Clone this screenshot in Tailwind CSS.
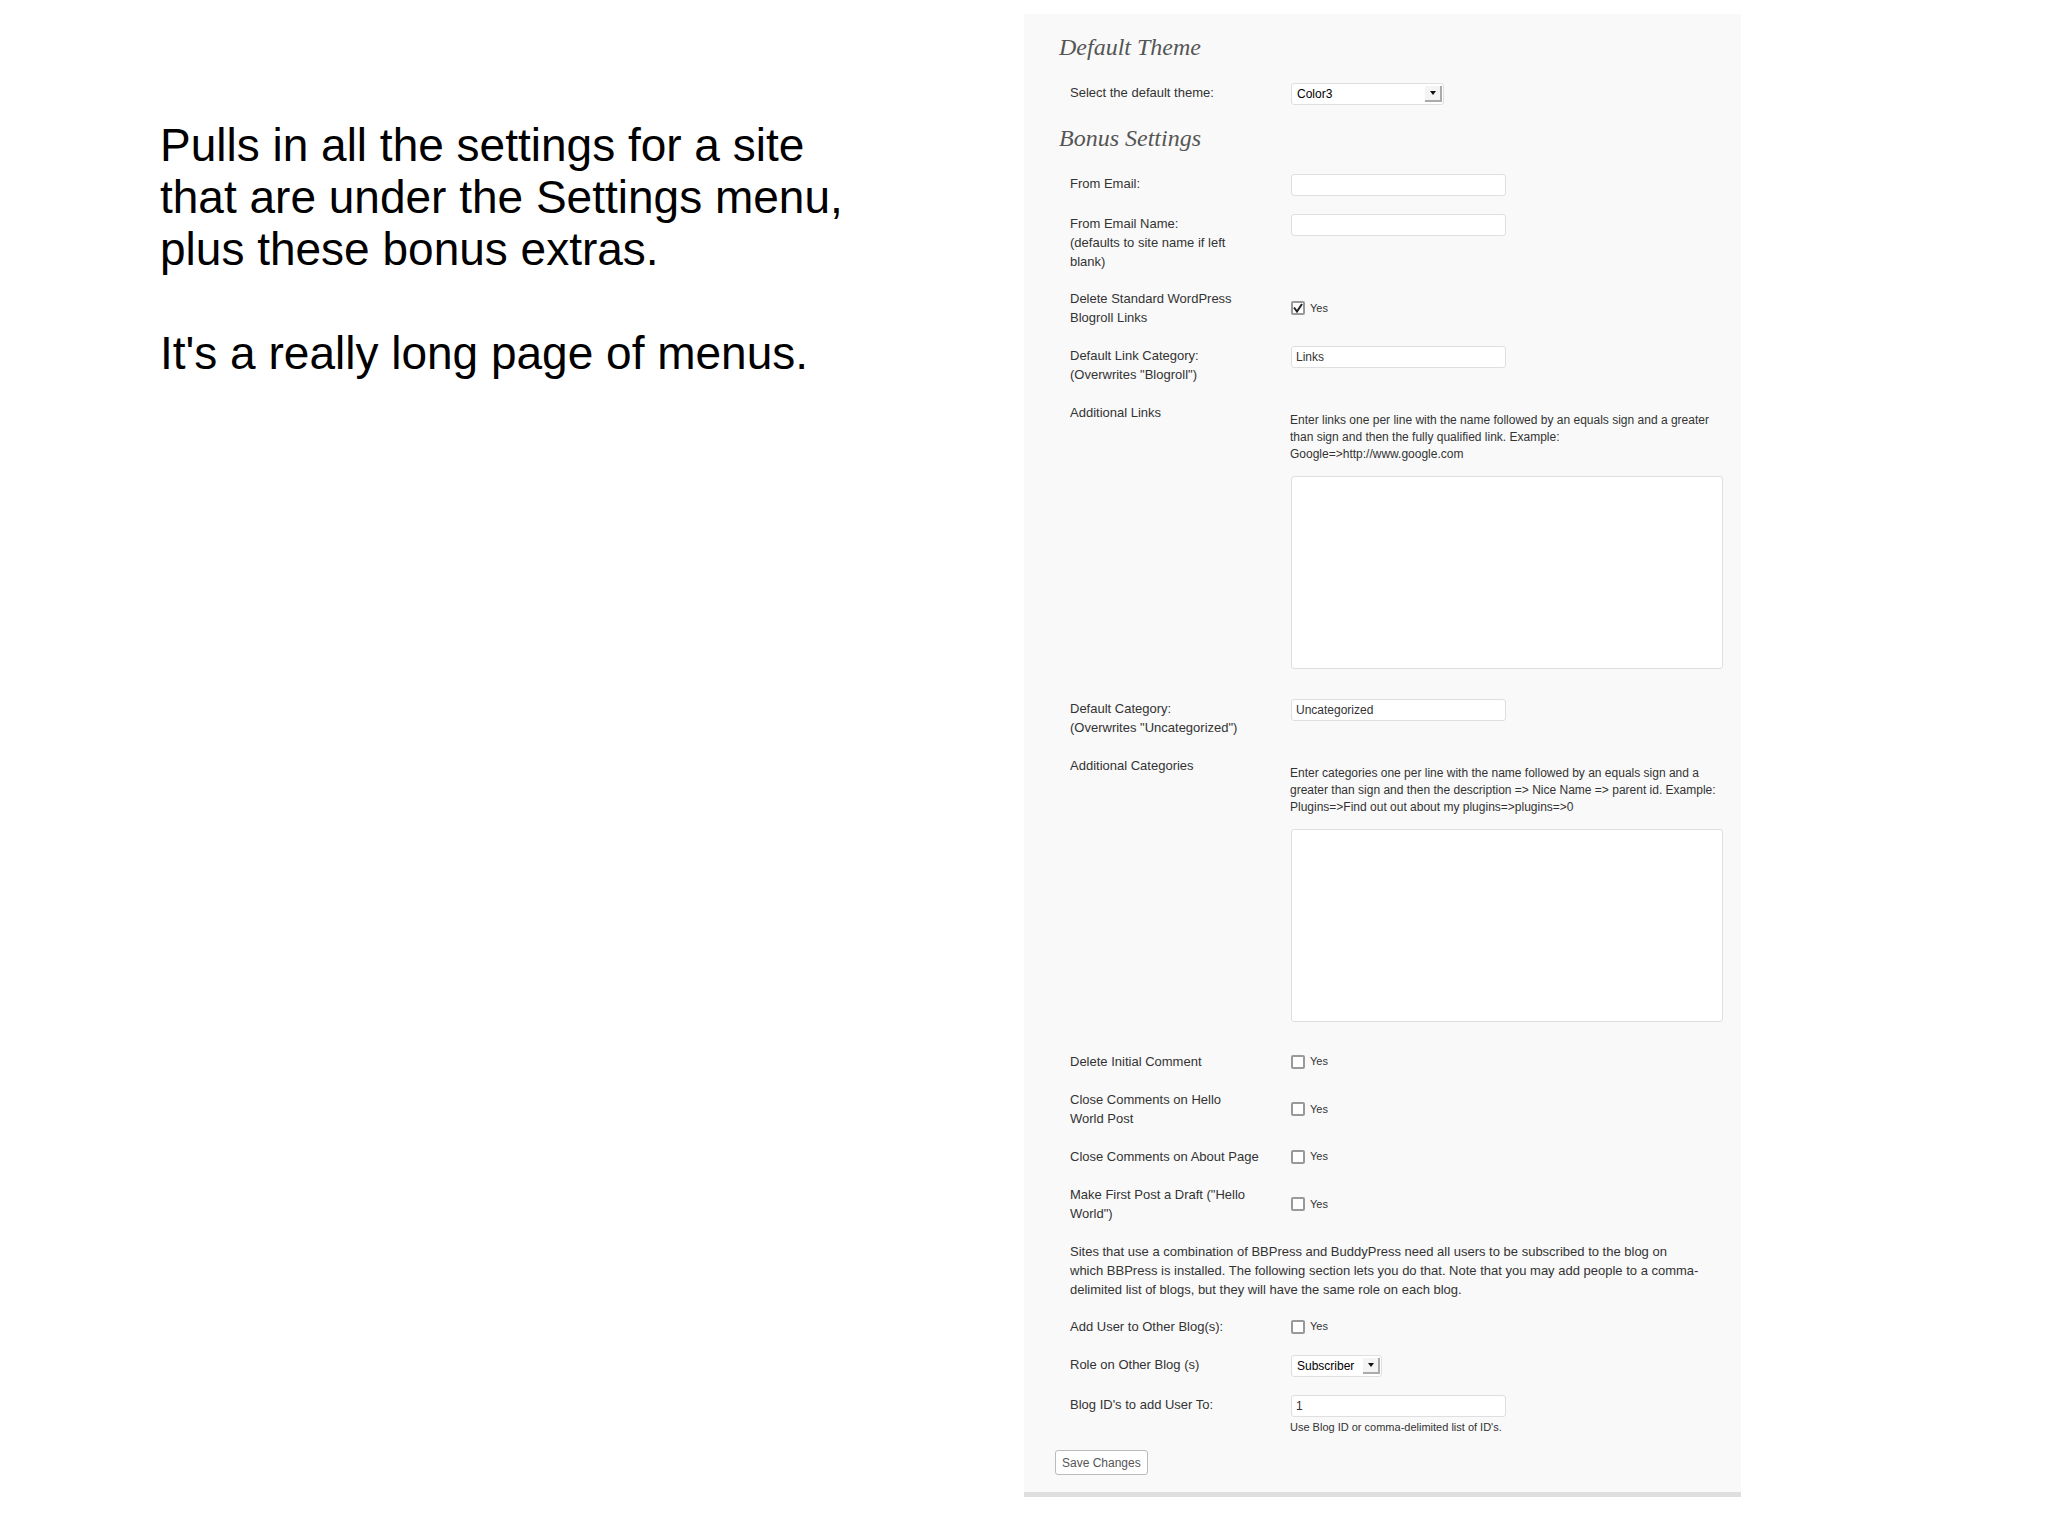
<!DOCTYPE html>
<html lang="en">
<head>
  <meta charset="UTF-8" />
  <meta name="viewport" content="width=device-width, initial-scale=1.0" />
  <title>Bonus Settings</title>
  <script src="https://cdn.jsdelivr.net/npm/@tailwindcss/browser@4"></script>
</head>
<body class="bg-white font-['Liberation_Sans',Arial,sans-serif] text-[#333]">
  <main class="flex items-start">
    <section class="w-1/2 pt-[119px] pl-[160px] pr-[140px] text-[46px] leading-[52px] text-black">
      <p class="mb-[52px]">Pulls in all the settings for a site that are under the Settings menu, plus these bonus extras.</p>
      <p>It's a really long page of menus.</p>
    </section>

    <form class="w-[35%] mt-[14px] pt-2 pb-[17px] bg-[#f9f9f9] border-b-5 border-[#dfdfdf] text-[13px] leading-[19px]">
      <h2 class="pl-[35px] font-['Liberation_Serif',serif] italic text-2xl leading-[51px] text-[#555]">Default Theme</h2>

      <div class="flex pt-[10px] pb-2 pl-[46px] pr-[18px]">
        <label for="theme" class="w-[202px] mr-[19px] shrink-0">Select the default theme:</label>
        <div class="relative w-[153px]">
          <select id="theme" class="block appearance-none w-full h-[22px] pl-[5px] bg-white border border-[#dfdfdf] rounded-[3px] text-xs leading-[20px] text-black">
            <option>Color3</option>
          </select>
          <span class="absolute top-[3px] right-[2px] w-[17px] h-[16px] flex items-center justify-center bg-[#f4f4f4] border-r-2 border-b-2 border-[#aaa] pointer-events-none">
            <svg class="w-[6px] h-[4px]" viewBox="0 0 6 4"><path d="M0 0h6L3 4z" fill="#111" /></svg>
          </span>
        </div>
      </div>

      <h2 class="pl-[35px] font-['Liberation_Serif',serif] italic text-2xl leading-[51px] text-[#555]">Bonus Settings</h2>

      <div class="flex pt-[10px] pb-[9px] pl-[46px] pr-[18px]">
        <label for="from-email" class="w-[202px] mr-[19px] shrink-0">From Email:</label>
        <input type="text" id="from-email" class="w-[215px] h-[22px] px-1 bg-white border border-[#dfdfdf] rounded-[3px] text-xs">
      </div>

      <div class="flex pt-[9px] pb-[9px] pl-[46px] pr-[18px]">
        <label for="from-name" class="w-[202px] mr-[19px] shrink-0">From Email Name:<br>(defaults to site name if left<br>blank)</label>
        <input type="text" id="from-name" class="w-[215px] h-[22px] px-1 bg-white border border-[#dfdfdf] rounded-[3px] text-xs">
      </div>

      <div class="flex pt-[9px] pb-[10px] pl-[46px] pr-[18px]">
        <span class="w-[202px] mr-[19px] shrink-0">Delete Standard WordPress<br>Blogroll Links</span>
        <label class="relative flex items-center gap-[5px] text-[11px]">
          <input type="checkbox" checked class="peer appearance-none w-[14px] h-[14px] bg-white border-2 border-[#999] rounded-[2px]">
          <svg class="hidden peer-checked:block absolute left-[2px] w-[10px] h-[10px] pointer-events-none" viewBox="0 0 10 10"><path d="M1 4.5L4 8.5L9 1" fill="none" stroke="#222" stroke-width="2" /></svg>
          Yes
        </label>
      </div>

      <div class="flex pt-[9px] pb-[10px] pl-[46px] pr-[18px]">
        <label for="link-cat" class="w-[202px] mr-[19px] shrink-0">Default Link Category:<br>(Overwrites "Blogroll")</label>
        <input type="text" id="link-cat" value="Links" class="w-[215px] h-[22px] px-1 bg-white border border-[#dfdfdf] rounded-[3px] text-xs">
      </div>

      <div class="flex pt-[9px] pb-[21px] pl-[46px] pr-[18px]">
        <label for="links" class="w-[202px] mr-[19px] shrink-0">Additional Links</label>
        <div class="grow pt-[9px]">
          <p class="-ml-px mb-[13px] text-xs leading-[17px]">Enter links one per line with the name followed by an equals sign and a greater<br>than sign and then the fully qualified link. Example:<br>Google=&gt;http://www.google.com</p>
          <textarea id="links" class="block w-full h-[193px] bg-white border border-[#dfdfdf] rounded-[3px] resize-none"></textarea>
        </div>
      </div>

      <div class="flex pt-[9px] pb-[10px] pl-[46px] pr-[18px]">
        <label for="cat" class="w-[202px] mr-[19px] shrink-0">Default Category:<br>(Overwrites "Uncategorized")</label>
        <input type="text" id="cat" value="Uncategorized" class="w-[215px] h-[22px] px-1 bg-white border border-[#dfdfdf] rounded-[3px] text-xs">
      </div>

      <div class="flex pt-[9px] pb-[21px] pl-[46px] pr-[18px]">
        <label for="cats" class="w-[202px] mr-[19px] shrink-0">Additional Categories</label>
        <div class="grow pt-[9px]">
          <p class="-ml-px mb-[13px] text-xs leading-[17px]">Enter categories one per line with the name followed by an equals sign and a<br>greater than sign and then the description =&gt; Nice Name =&gt; parent id. Example:<br>Plugins=&gt;Find out out about my plugins=&gt;plugins=&gt;0</p>
          <textarea id="cats" class="block w-full h-[193px] bg-white border border-[#dfdfdf] rounded-[3px] resize-none"></textarea>
        </div>
      </div>

      <div class="flex pt-[9px] pb-[10px] pl-[46px] pr-[18px]">
        <span class="w-[202px] mr-[19px] shrink-0">Delete Initial Comment</span>
        <label class="flex items-center gap-[5px] text-[11px]"><input type="checkbox" class="appearance-none w-[14px] h-[14px] bg-white border-2 border-[#999] rounded-[2px]"> Yes</label>
      </div>

      <div class="flex pt-[9px] pb-[10px] pl-[46px] pr-[18px]">
        <span class="w-[202px] mr-[19px] shrink-0">Close Comments on Hello<br>World Post</span>
        <label class="flex items-center gap-[5px] text-[11px]"><input type="checkbox" class="appearance-none w-[14px] h-[14px] bg-white border-2 border-[#999] rounded-[2px]"> Yes</label>
      </div>

      <div class="flex pt-[9px] pb-[10px] pl-[46px] pr-[18px]">
        <span class="w-[202px] mr-[19px] shrink-0">Close Comments on About Page</span>
        <label class="flex items-center gap-[5px] text-[11px]"><input type="checkbox" class="appearance-none w-[14px] h-[14px] bg-white border-2 border-[#999] rounded-[2px]"> Yes</label>
      </div>

      <div class="flex pt-[9px] pb-[10px] pl-[46px] pr-[18px]">
        <span class="w-[202px] mr-[19px] shrink-0">Make First Post a Draft ("Hello<br>World")</span>
        <label class="flex items-center gap-[5px] text-[11px]"><input type="checkbox" class="appearance-none w-[14px] h-[14px] bg-white border-2 border-[#999] rounded-[2px]"> Yes</label>
      </div>

      <p class="pt-[9px] pb-[9px] pl-[46px] pr-[18px]">Sites that use a combination of BBPress and BuddyPress need all users to be subscribed to the blog on<br>which BBPress is installed. The following section lets you do that. Note that you may add people to a comma-<br>delimited list of blogs, but they will have the same role on each blog.</p>

      <div class="flex pt-[9px] pb-[10px] pl-[46px] pr-[18px]">
        <span class="w-[202px] mr-[19px] shrink-0">Add User to Other Blog(s):</span>
        <label class="flex items-center gap-[5px] text-[11px]"><input type="checkbox" class="appearance-none w-[14px] h-[14px] bg-white border-2 border-[#999] rounded-[2px]"> Yes</label>
      </div>

      <div class="flex pt-[9px] pb-[9px] pl-[46px] pr-[18px]">
        <label for="role" class="w-[202px] mr-[19px] shrink-0">Role on Other Blog (s)</label>
        <div class="relative w-[91px]">
          <select id="role" class="block appearance-none w-full h-[22px] pl-[5px] bg-white border border-[#dfdfdf] rounded-[3px] text-xs leading-[20px] text-black">
            <option>Subscriber</option>
          </select>
          <span class="absolute top-[3px] right-[2px] w-[17px] h-[16px] flex items-center justify-center bg-[#f4f4f4] border-r-2 border-b-2 border-[#aaa] pointer-events-none">
            <svg class="w-[6px] h-[4px]" viewBox="0 0 6 4"><path d="M0 0h6L3 4z" fill="#111" /></svg>
          </span>
        </div>
      </div>

      <div class="flex pt-[9px] pb-[13px] pl-[46px] pr-[18px]">
        <label for="blog-ids" class="w-[202px] mr-[19px] shrink-0">Blog ID's to add User To:</label>
        <div>
          <input type="text" id="blog-ids" value="1" class="block w-[215px] h-[22px] px-1 bg-white border border-[#dfdfdf] rounded-[3px] text-xs">
          <p class="-ml-px text-[11px] leading-[20px]">Use Blog ID or comma-delimited list of ID's.</p>
        </div>
      </div>

      <button type="submit" class="block ml-[31px] h-[25px] px-[6px] bg-white border border-[#bbb] rounded-[3px] text-xs text-[#555]">Save Changes</button>
    </form>
  </main>
</body>
</html>
